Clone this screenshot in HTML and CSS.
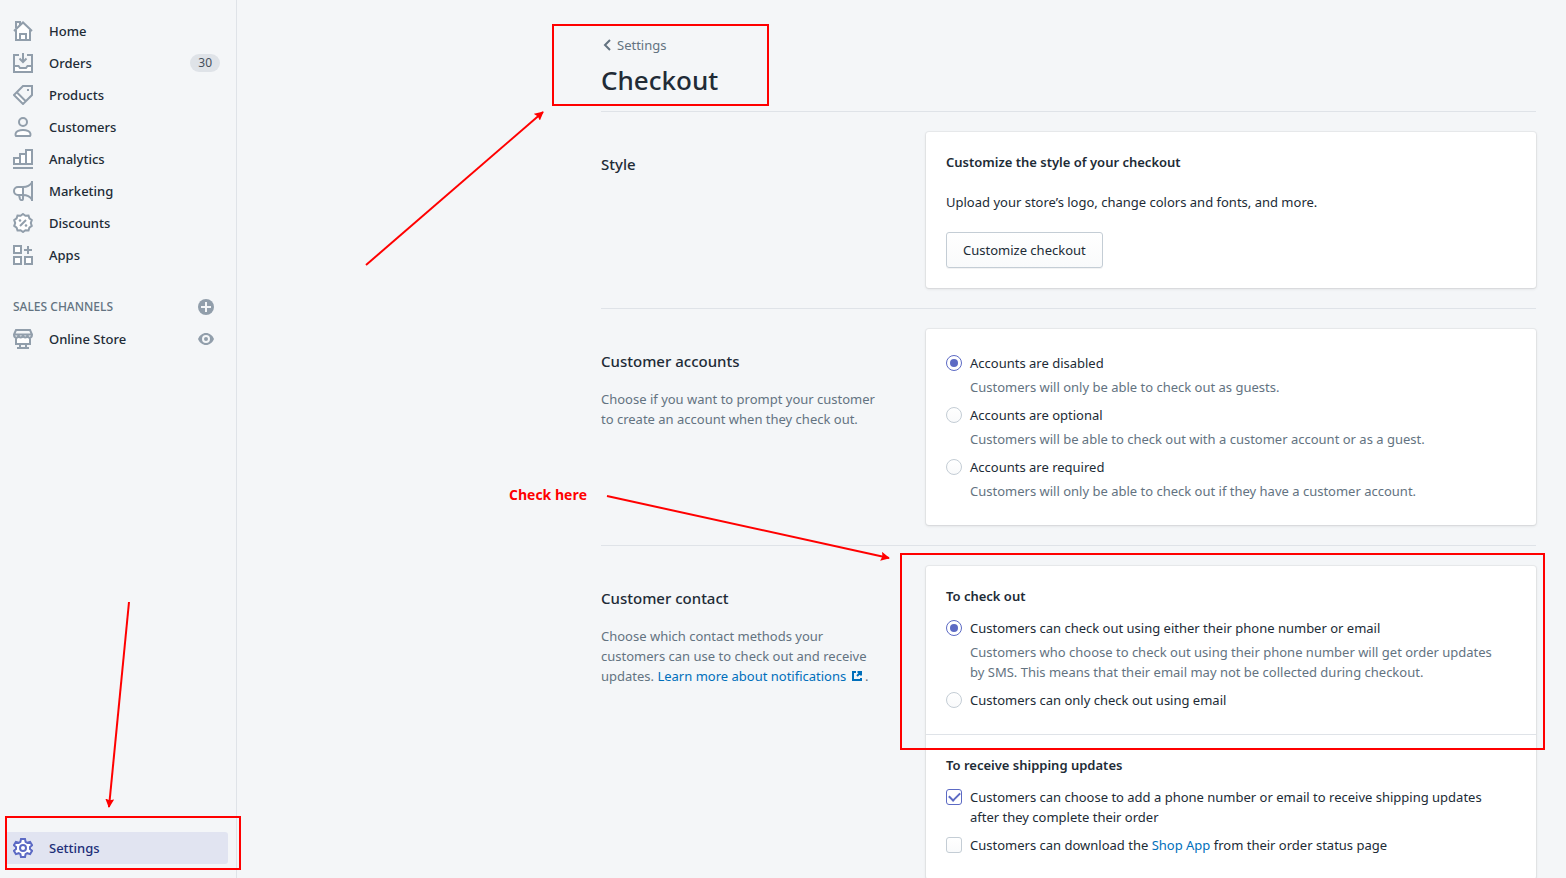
FILE: index.html
```html
<!DOCTYPE html>
<html lang="en">
<head>
    <meta charset="UTF-8">
    <meta name="viewport" content="width=device-width, initial-scale=1.0">
    <title>Checkout settings</title>
    <link rel="stylesheet" href="styles.css">
</head>
<body>
    <div class="app">
        <nav class="sidebar">
            <ul class="nav-list">
                <li><a class="nav-item" href="#">
                    <svg class="icon" viewBox="0 0 20 20"><path class="fill" d="M3 9v10h14V9l-7-7z"/><path d="M3 8v11h14V8M1 10l9-8.500 9 8.500M3 7V1h4v3M7 19v-6h6v6"/></svg>
                    <span class="nav-label">Home</span></a></li>
                <li><a class="nav-item" href="#">
                    <svg class="icon" viewBox="0 0 20 20"><path class="fill" d="M1 13h5l2 2h4l2-2h5v6H1z"/><path d="M6 2H1v17h18V2h-5M1 13h4.500l1.500 2h6l1.500-2H19M10 0v8M6.500 5.500L10 9l3.500-3.500"/></svg>
                    <span class="nav-label">Orders</span><span class="badge">30</span></a></li>
                <li><a class="nav-item" href="#">
                    <svg class="icon" viewBox="0 0 20 20"><path class="fill" d="M4 8l8 8-2 3-9-9z"/><path d="M1 10l9-9h9v9l-9 9zM4 7.500l8.500 8.500"/><path class="solid" d="M14 4h2v2h-2z"/></svg>
                    <span class="nav-label">Products</span></a></li>
                <li><a class="nav-item" href="#">
                    <svg class="icon" viewBox="0 0 20 20"><circle cx="10" cy="5" r="4"/><path class="white" d="M3 19c-1-1-.5-4 1.500-4.800 3.500-1.600 7.500-1.600 11 0 2 .8 2.500 3.800 1.500 4.800z"/></svg>
                    <span class="nav-label">Customers</span></a></li>
                <li><a class="nav-item" href="#">
                    <svg class="icon" viewBox="0 0 20 20"><path class="white" d="M1 15V9h6v6zM7 15V5h6v10zM13 15V1h6v14z"/><path d="M0 19h20"/></svg>
                    <span class="nav-label">Analytics</span></a></li>
                <li><a class="nav-item" href="#">
                    <svg class="icon" viewBox="0 0 20 20"><path class="white" d="M10 6H5a4 4 0 0 0 0 8h5z"/><path d="M10 6c4 0 7-1.500 9-4.500v17c-2-3-5-4.500-9-4.500M6 14l1 4c.5 1.500 3 1.500 3 0v-4M19 0v20"/></svg>
                    <span class="nav-label">Marketing</span></a></li>
                <li><a class="nav-item" href="#">
                    <svg class="icon" viewBox="0 0 20 20"><path class="white" d="M10 1l2.400 1.800 3.100-.3.900 2.900 2.400 1.700L17.800 10l1 2.900-2.400 1.700-.9 2.900-3.100-.3L10 19l-2.400-1.800-3.100.3-.9-2.900-2.400-1.700 1-2.900-1-2.900 2.400-1.700.9-2.900 3.100.3z"/><path d="M7 13l6-6"/><circle class="solid" cx="7" cy="7.500" r="1.300"/><circle class="solid" cx="13" cy="12.500" r="1.300"/></svg>
                    <span class="nav-label">Discounts</span></a></li>
                <li><a class="nav-item" href="#">
                    <svg class="icon" viewBox="0 0 20 20"><path class="white" d="M1 1h7v7H1zM1 12h7v7H1zM12 12h7v7h-7z"/><path d="M15 1v8M11 5h8"/></svg>
                    <span class="nav-label">Apps</span></a></li>
            </ul>
            <div class="nav-heading">
                <h2>Sales channels</h2>
                <button type="button" class="icon-btn" aria-label="Add sales channel">
                    <svg viewBox="0 0 16 16"><circle cx="8" cy="8" r="8"/><path class="cut" d="M8 3v10M3 8h10"/></svg>
                </button>
            </div>
            <ul class="nav-list">
                <li class="nav-row"><a class="nav-item" href="#">
                    <svg class="icon" viewBox="0 0 20 20"><path class="fill" d="M3 8h14v7H3z"/><path d="M3 9v6h14V9M3 1h14l2 4.500c0 4-4 4-4.500 1-.5 2.500-4 2.500-4.500 0-.5 2.500-4 2.500-4.500 0C5 9.500 1 9.500 1 5.500zM1 5.500h18M7 15v4M13 15v4M4 19h12"/></svg>
                    <span class="nav-label">Online Store</span></a>
                    <button type="button" class="icon-btn" aria-label="View your online store">
                        <svg viewBox="0 0 16 16"><path d="M0 8c1.500-3.500 4.500-6 8-6s6.500 2.500 8 6c-1.500 3.500-4.500 6-8 6S1.500 11.500 0 8z"/><circle class="cut" cx="8" cy="8" r="3"/></svg>
                    </button></li>
            </ul>
            <a class="nav-item nav-settings" href="#">
                <svg class="icon" viewBox="0 0 20 20"><path class="white" d="M8 1h4l.6 2.800 1.700 1 2.800-.9 2 3.400L17 9v2l2.100 1.700-2 3.400-2.800-.9-1.700 1L12 19H8l-.6-2.800-1.700-1-2.800.9-2-3.400L3 11V9L.9 7.300l2-3.400 2.800.9 1.700-1z"/><circle cx="10" cy="10" r="3"/></svg>
                <span class="nav-label">Settings</span></a>
        </nav>

        <main class="main">
            <div class="page">
                <header class="page-header">
                    <a class="breadcrumb" href="#">
                        <svg viewBox="0 0 8 12"><path d="M7 1L2 6l5 5"/></svg>Settings</a>
                    <h1>Checkout</h1>
                </header>

                <section class="section">
                    <div class="section-info">
                        <h2>Style</h2>
                    </div>
                    <div class="card">
                        <div class="card-section style-section">
                            <h3>Customize the style of your checkout</h3>
                            <p>Upload your store’s logo, change colors and fonts, and more.</p>
                            <button type="button" class="btn">Customize checkout</button>
                        </div>
                    </div>
                </section>

                <section class="section">
                    <div class="section-info">
                        <h2>Customer accounts</h2>
                        <p>Choose if you want to prompt your customer to create an account when they check out.</p>
                    </div>
                    <div class="card">
                        <div class="card-section">
                            <div class="choice">
                                <input type="radio" name="accounts" id="accountsDisabled" checked>
                                <label for="accountsDisabled">Accounts are disabled</label>
                                <p>Customers will only be able to check out as guests.</p>
                            </div>
                            <div class="choice">
                                <input type="radio" name="accounts" id="accountsOptional">
                                <label for="accountsOptional">Accounts are optional</label>
                                <p>Customers will be able to check out with a customer account or as a guest.</p>
                            </div>
                            <div class="choice">
                                <input type="radio" name="accounts" id="accountsRequired">
                                <label for="accountsRequired">Accounts are required</label>
                                <p>Customers will only be able to check out if they have a customer account.</p>
                            </div>
                        </div>
                    </div>
                </section>

                <section class="section">
                    <div class="section-info">
                        <h2>Customer contact</h2>
                        <p>Choose which contact methods your customers can use to check out and receive updates. <a href="#">Learn more about notifications <svg class="external" viewBox="0 0 10 10"><path d="M4 1H1v8h8V7M5 5l4-4M5.500 1H9v3.500"/></svg></a> .</p>
                    </div>
                    <div class="card">
                        <div class="card-section">
                            <h3>To check out</h3>
                            <div class="choice">
                                <input type="radio" name="contact" id="contactEither" checked>
                                <label for="contactEither">Customers can check out using either their phone number or email</label>
                                <p>Customers who choose to check out using their phone number will get order updates by SMS. This means that their email may not be collected during checkout.</p>
                            </div>
                            <div class="choice">
                                <input type="radio" name="contact" id="contactEmail">
                                <label for="contactEmail">Customers can only check out using email</label>
                            </div>
                        </div>
                        <div class="card-section">
                            <h3>To receive shipping updates</h3>
                            <div class="choice">
                                <input type="checkbox" id="shippingUpdates" checked>
                                <label for="shippingUpdates">Customers can choose to add a phone number or email to receive shipping updates after they complete their order</label>
                            </div>
                            <div class="choice">
                                <input type="checkbox" id="shopApp">
                                <label for="shopApp">Customers can download the <a href="#">Shop App</a> from their order status page</label>
                            </div>
                        </div>
                    </div>
                </section>
            </div>
        </main>
    </div>

    <!-- Guide marks drawn over the page -->
    <div class="mark mark-title"></div>
    <div class="mark mark-contact"></div>
    <div class="mark mark-settings"></div>
    <p class="mark-text">Check here</p>
    <svg class="arrows" viewBox="0 0 1566 878" width="1566" height="878">
        <defs>
            <marker id="head" viewBox="0 0 10 10" refX="9" refY="5" markerWidth="9" markerHeight="9" markerUnits="userSpaceOnUse" orient="auto">
                <path d="M0 0l10 5-10 5 1.500-5z"/>
            </marker>
        </defs>
        <path class="line" d="M366 265L543 112"/>
        <path class="line" d="M607 496L889 558"/>
        <path class="line" d="M129 602L109 807"/>
    </svg>
</body>
</html>
```
FILE: styles.css
```css
* {
    box-sizing: border-box;
}

body {
    margin: 0;
    background: #f4f6f8;
    color: #212b36;
    font-family: "Noto Sans", "Open Sans", sans-serif;
    font-size: 13px;
    line-height: 20px;
}

h1, h2, h3, p, ul {
    margin: 0;
    padding: 0;
}

ul {
    list-style: none;
}

a {
    color: #006fbb;
    text-decoration: none;
}

.app {
    display: flex;
    height: 100vh;
}

/* Sidebar */
.sidebar {
    display: flex;
    flex-direction: column;
    flex: 0 0 237px;
    padding: 15px 8px 14px 0;
    border-right: 1px solid #dfe3e8;
}

.nav-item {
    display: flex;
    flex: 1;
    align-items: center;
    height: 32px;
    padding: 0 8px 0 13px;
    color: #212b36;
    font-weight: 500;
}

.nav-label {
    flex: 1;
    padding-left: 16px;
}

.icon {
    width: 20px;
    height: 20px;
    fill: none;
    stroke: #919eab;
    stroke-width: 2;
}

.icon .fill {
    fill: #fff;
    stroke: none;
}

.icon .white {
    fill: #fff;
}

.icon .solid {
    fill: #919eab;
    stroke: none;
}

.badge {
    padding: 0 8px;
    border-radius: 10px;
    background: #dfe3e8;
    color: #454f5b;
    font-size: 12px;
    font-weight: 400;
    line-height: 18px;
}

.nav-heading {
    display: flex;
    align-items: center;
    justify-content: space-between;
    height: 32px;
    margin-top: 20px;
    padding: 0 14px 0 13px;
}

.nav-heading h2 {
    color: #637381;
    font-size: 12px;
    font-weight: 500;
    text-transform: uppercase;
}

.nav-row {
    display: flex;
    align-items: center;
    padding-right: 14px;
}

.icon-btn {
    width: 16px;
    height: 16px;
    padding: 0;
    border: none;
    background: none;
    cursor: pointer;
}

.icon-btn svg {
    display: block;
    fill: #919eab;
}

.icon-btn .cut {
    stroke: #f4f6f8;
    stroke-width: 2;
}

.nav-settings {
    flex: none;
    margin-top: auto;
    margin-left: 6px;
    padding-left: 7px;
    border-radius: 0 3px 3px 0;
    background: #e1e4f1;
    color: #202e78;
}

.nav-settings .icon {
    stroke: #5c6ac4;
}

/* Page */
.main {
    flex: 1;
    overflow-y: auto;
    scrollbar-width: none;
    padding: 0 30px;
}

.page {
    max-width: 935px;
    margin-left: auto;
}

.page-header {
    padding: 35px 0 11px;
}

.breadcrumb {
    display: flex;
    align-items: center;
    gap: 6px;
    color: #637381;
}

.breadcrumb svg {
    width: 8px;
    height: 12px;
    margin-left: 2px;
    fill: none;
    stroke: #637381;
    stroke-width: 2;
}

h1 {
    margin-top: 5px;
    font-size: 26px;
    font-weight: 500;
    line-height: 40px;
}

.section {
    display: grid;
    grid-template-columns: 1fr 2fr;
    gap: 20px;
    padding: 20px 0;
    border-top: 1px solid #dfe3e8;
}

.section-info {
    padding: 20px 20px 0 0;
    color: #637381;
}

.section-info h2 {
    color: #212b36;
    font-size: 15px;
    font-weight: 500;
    line-height: 24px;
}

.section-info p {
    margin-top: 16px;
}

.external {
    width: 10px;
    height: 10px;
    margin-left: 2px;
    fill: none;
    stroke: #006fbb;
    stroke-width: 2;
}

.card {
    border-radius: 3px;
    background: #fff;
    box-shadow: 0 0 0 1px rgba(63, 63, 68, 0.05), 0 1px 3px 0 rgba(63, 63, 68, 0.15);
}

.card-section {
    padding: 20px;
}

.card-section + .card-section {
    border-top: 1px solid #dfe3e8;
}

.card-section h3 {
    margin-bottom: 8px;
    font-size: 13px;
    font-weight: 600;
}

.style-section {
    display: flex;
    flex-direction: column;
    align-items: flex-start;
    gap: 20px;
}

.card-section.style-section h3 {
    margin: 0;
}

.btn {
    height: 36px;
    padding: 0 16px;
    border: 1px solid #c4cdd5;
    border-radius: 3px;
    background: linear-gradient(to bottom, #fff, #f9fafb);
    box-shadow: 0 1px 0 0 rgba(22, 29, 37, 0.05);
    color: #212b36;
    font: inherit;
    cursor: pointer;
}

.choice {
    display: grid;
    grid-template-columns: 16px 1fr;
    gap: 4px 8px;
    padding: 4px 12px 4px 0;
}

.choice p {
    grid-column: 2;
    color: #637381;
}

.choice input {
    appearance: none;
    display: grid;
    place-items: center;
    width: 16px;
    height: 16px;
    margin: 2px 0;
    border: 1px solid #c4cdd5;
    border-radius: 3px;
    background: linear-gradient(to bottom, #fff, #f9fafb);
}

.choice input[type="radio"] {
    border-radius: 50%;
}

.choice input:checked {
    border-color: #5c6ac4;
    background: #fff;
}

.choice input[type="radio"]:checked::before {
    content: "";
    width: 8px;
    height: 8px;
    border-radius: 50%;
    background: #5c6ac4;
}

.choice input[type="checkbox"]:checked::before {
    content: "";
    width: 9px;
    height: 5px;
    margin-bottom: 3px;
    border: solid #5c6ac4;
    border-width: 0 0 2px 2px;
    transform: rotate(-45deg);
}

/* Guide marks */
.mark {
    position: absolute;
    border: 2px solid #f00;
}

.mark-title {
    left: 552px;
    top: 24px;
    width: 217px;
    height: 82px;
}

.mark-contact {
    left: 900px;
    top: 553px;
    width: 645px;
    height: 197px;
}

.mark-settings {
    left: 5px;
    top: 816px;
    width: 236px;
    height: 54px;
}

.mark-text {
    position: absolute;
    left: 509px;
    top: 485px;
    color: #f00;
    font-family: "Open Sans", sans-serif;
    font-size: 14px;
    font-weight: 700;
}

.arrows {
    position: absolute;
    left: 0;
    top: 0;
    fill: #f00;
    pointer-events: none;
}

.arrows .line {
    fill: none;
    stroke: #f00;
    stroke-width: 2;
    marker-end: url(#head);
}
```
